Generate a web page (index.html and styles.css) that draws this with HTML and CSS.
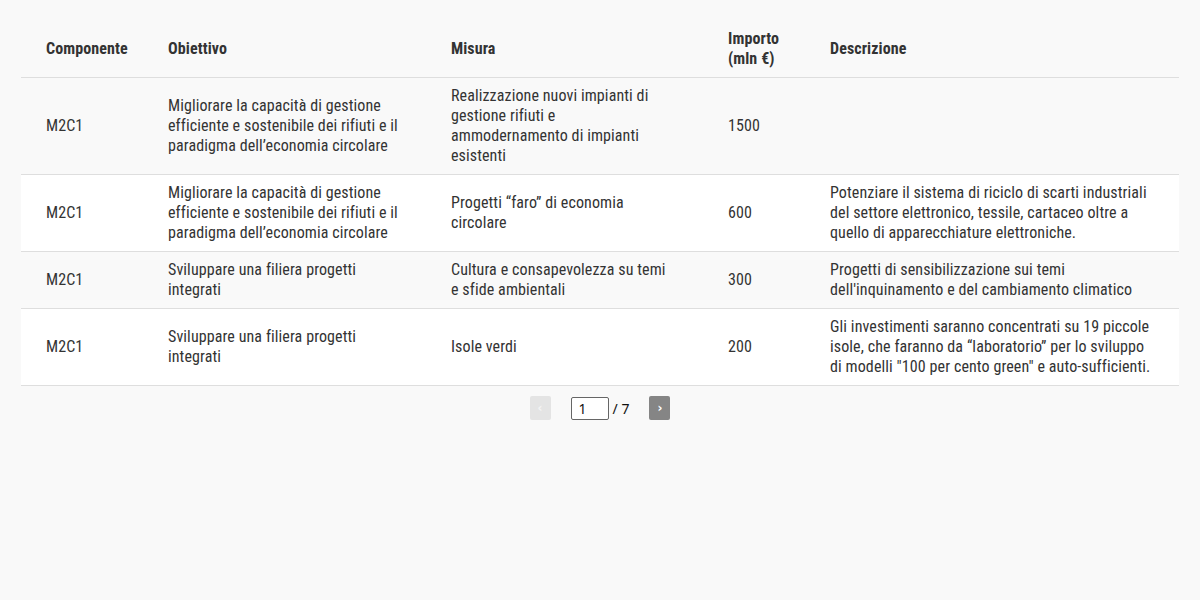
FILE: index.html
```html
<!DOCTYPE html>
<html lang="it">
<head>
<meta charset="utf-8">
<title>Tabella misure</title>
<link rel="stylesheet" href="styles.css">
</head>
<body>
<div class="wrap">
  <table class="data">
    <colgroup>
      <col class="c1"><col class="c2"><col class="c3"><col class="c4"><col class="c5">
    </colgroup>
    <thead>
      <tr>
        <th>Componente</th>
        <th>Obiettivo</th>
        <th class="misura">Misura</th>
        <th>Importo<br>(mln €)</th>
        <th>Descrizione</th>
      </tr>
    </thead>
    <tbody>
      <tr>
        <td>M2C1</td>
        <td>Migliorare la capacità di gestione efficiente e sostenibile dei rifiuti e il paradigma dell’economia circolare</td>
        <td class="misura">Realizzazione nuovi impianti di gestione rifiuti e ammodernamento di impianti esistenti</td>
        <td>1500</td>
        <td></td>
      </tr>
      <tr>
        <td>M2C1</td>
        <td>Migliorare la capacità di gestione efficiente e sostenibile dei rifiuti e il paradigma dell’economia circolare</td>
        <td class="misura">Progetti “faro” di economia circolare</td>
        <td>600</td>
        <td>Potenziare il sistema di riciclo di scarti industriali del settore elettronico, tessile, cartaceo oltre a quello di apparecchiature elettroniche.</td>
      </tr>
      <tr>
        <td>M2C1</td>
        <td>Sviluppare una filiera progetti integrati</td>
        <td class="misura">Cultura e consapevolezza su temi e sfide ambientali</td>
        <td>300</td>
        <td>Progetti di sensibilizzazione sui temi dell'inquinamento e del cambiamento climatico</td>
      </tr>
      <tr>
        <td>M2C1</td>
        <td>Sviluppare una filiera progetti integrati</td>
        <td class="misura">Isole verdi</td>
        <td>200</td>
        <td>Gli investimenti saranno concentrati su 19 piccole isole, che faranno da “laboratorio” per lo sviluppo di modelli "100 per cento green" e auto-sufficienti.</td>
      </tr>
    </tbody>
  </table>
  <div class="pager">
    <button class="pbtn prev" disabled>‹</button>
    <input class="page-input" type="text" value="1">
    <span class="total">/ 7</span>
    <button class="pbtn next">›</button>
  </div>
</div>
</body>
</html>
```
FILE: styles.css
```css
html, body {
  margin: 0;
  padding: 0;
  background: #f9f9f9;
}
body {
  font-family: "Roboto Condensed", Roboto, sans-serif;
  color: #333;
  font-size: 16px;
}
.wrap {
  padding: 21px 21px 0 21px;
}
.data {
  width: 1158px;
  border-collapse: collapse;
  table-layout: fixed;
}
.c1 { width: 122px; }
.c2 { width: 283px; }
.c3 { width: 277px; }
.c4 { width: 102px; }
.c5 { width: 374px; }
.data th, .data td {
  padding: 8px 25px;
  line-height: 20px;
  text-align: left;
  vertical-align: middle;
  border-bottom: 1px solid #dedede;
}
.data th {
  font-weight: 700;
  color: #333;
  letter-spacing: 0.1px;
}
.data td {
  letter-spacing: 0.1px;
}
.data .misura {
  padding-right: 30px;
}
.data tbody tr:nth-child(even) {
  background: #ffffff;
}
.pager {
  display: flex;
  justify-content: center;
  align-items: center;
  margin-top: 10px;
}
.pbtn {
  width: 21px;
  height: 24px;
  border: none;
  border-radius: 2px;
  padding: 0;
  font-family: "DejaVu Sans", sans-serif;
  font-size: 12px;
  font-weight: 700;
  line-height: 24px;
  color: #fff;
  background: #858585;
}
.pbtn.prev {
  background: #e4e4e4;
  color: #f4f4f4;
  margin-right: 20px;
}
.pbtn.next {
  margin-left: 20px;
}
.page-input {
  width: 38px;
  height: 23px;
  box-sizing: border-box;
  border: 1px solid #666;
  border-radius: 2px;
  padding: 0 7px;
  font-family: "Noto Sans", sans-serif;
  font-size: 14px;
  color: #111;
  background: #fff;
}
.total {
  font-family: "Noto Sans", sans-serif;
  font-size: 14px;
  color: #111;
  margin-left: 4px;
}
```
